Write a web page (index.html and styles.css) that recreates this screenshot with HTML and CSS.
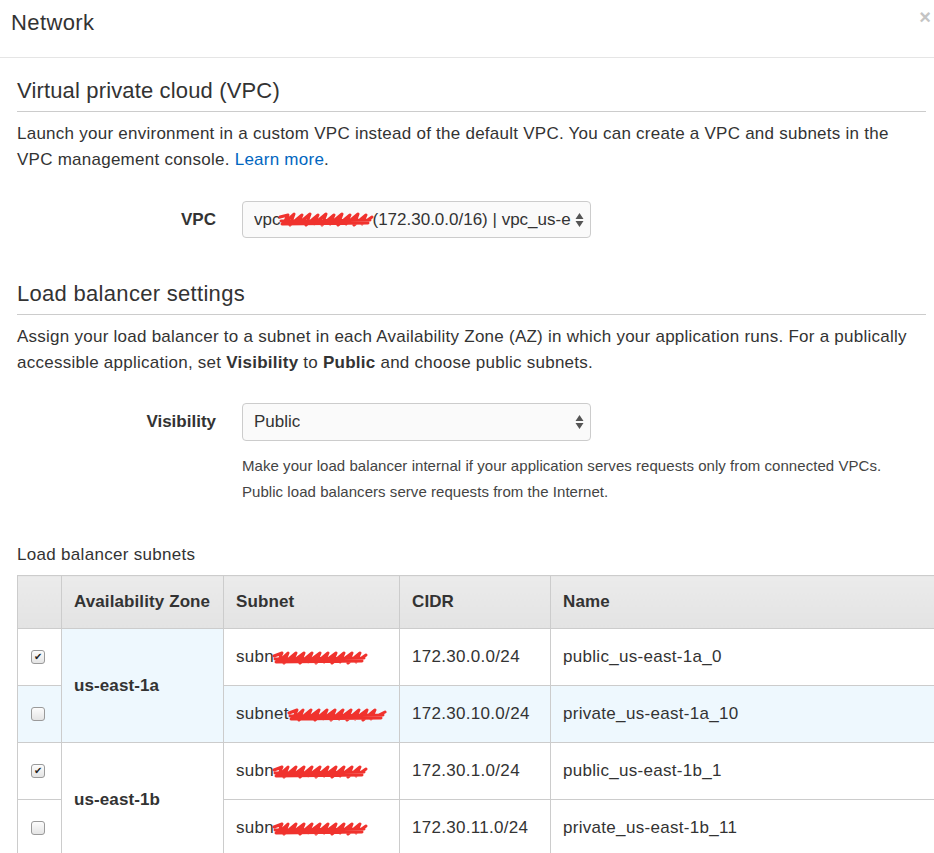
FILE: index.html
```html
<!DOCTYPE html>
<html>
<head>
<meta charset="utf-8">
<link rel="stylesheet" href="styles.css">
</head>
<body>
<div class="modal">
  <div class="modal-header">
    <h1 class="modal-title">Network</h1>
    <span class="close">×</span>
  </div>
  <div class="modal-body">
    <h2 class="section-title">Virtual private cloud (VPC)</h2>
    <p class="desc">Launch your environment in a custom VPC instead of the default VPC. You can create a VPC and subnets in the VPC management console. <a class="link">Learn more</a>.</p>
    <div class="form-row">
      <label class="form-label">VPC</label>
      <div class="select">
        <span class="select-text">vpc<svg class="scribble" width="96" height="18" viewBox="0 0 96 18"><path d="M2 6 L10 4 L6 12 L16 3 L12 14 L24 4 L20 13 L32 3 L28 14 L40 4 L36 13 L48 3 L44 14 L56 4 L52 13 L64 3 L60 14 L72 4 L68 13 L80 3 L76 14 L88 4 L84 13 L94 6 M3 10 L92 9 M4 13 L90 12" fill="none" stroke="#f0322d" stroke-width="3" stroke-linejoin="round" stroke-linecap="round"/></svg>(172.30.0.0/16) | vpc_us-e</span>
        <span class="arrows"><svg width="9" height="16" viewBox="0 0 9 16"><path d="M4.5 1 L8.5 7 L0.5 7 Z M0.5 9 L8.5 9 L4.5 15 Z" fill="#555"/></svg></span>
      </div>
    </div>

    <h2 class="section-title second">Load balancer settings</h2>
    <p class="desc">Assign your load balancer to a subnet in each Availability Zone (AZ) in which your application runs. For a publically accessible application, set <b>Visibility</b> to <b>Public</b> and choose public subnets.</p>
    <div class="form-row vis-row">
      <label class="form-label">Visibility</label>
      <div class="select">
        <span class="select-text">Public</span>
        <span class="arrows"><svg width="9" height="16" viewBox="0 0 9 16"><path d="M4.5 1 L8.5 7 L0.5 7 Z M0.5 9 L8.5 9 L4.5 15 Z" fill="#555"/></svg></span>
      </div>
    </div>
    <div class="help">
      <div>Make your load balancer internal if your application serves requests only from connected VPCs.</div>
      <div>Public load balancers serve requests from the Internet.</div>
    </div>

    <div class="subnets-label">Load balancer subnets</div>
    <table class="subnets">
      <thead>
        <tr>
          <th class="c-check"></th>
          <th class="c-az">Availability Zone</th>
          <th class="c-subnet">Subnet</th>
          <th class="c-cidr">CIDR</th>
          <th class="c-name">Name</th>
        </tr>
      </thead>
      <tbody>
        <tr>
          <td class="c-check"><span class="cb checked">✔</span></td>
          <td class="c-az az-blue" rowspan="2">us-east-1a</td>
          <td>subn<svg class="scribble" width="96" height="16" viewBox="0 0 96 16"><path d="M2 6 L10 3 L6 12 L16 3 L12 13 L24 3 L20 12 L32 3 L28 13 L40 3 L36 12 L48 3 L44 13 L56 3 L52 12 L64 3 L60 13 L72 3 L68 12 L80 3 L76 13 L88 3 L84 12 L94 5 M3 9 L92 8 M4 12 L90 11" fill="none" stroke="#f0322d" stroke-width="3" stroke-linejoin="round" stroke-linecap="round"/></svg></td>
          <td>172.30.0.0/24</td>
          <td>public_us-east-1a_0</td>
        </tr>
        <tr class="row-blue">
          <td class="c-check"><span class="cb"></span></td>
          <td>subnet<svg class="scribble" width="100" height="16" viewBox="0 0 100 16"><path d="M2 6 L10 3 L6 12 L16 3 L12 13 L24 3 L20 12 L32 3 L28 13 L40 3 L36 12 L48 3 L44 13 L56 3 L52 12 L64 3 L60 13 L72 3 L68 12 L80 3 L76 13 L88 3 L84 12 L98 5 M3 9 L96 8 M4 12 L94 11" fill="none" stroke="#f0322d" stroke-width="3" stroke-linejoin="round" stroke-linecap="round"/></svg></td>
          <td>172.30.10.0/24</td>
          <td>private_us-east-1a_10</td>
        </tr>
        <tr>
          <td class="c-check"><span class="cb checked">✔</span></td>
          <td class="c-az" rowspan="2">us-east-1b</td>
          <td>subn<svg class="scribble" width="96" height="16" viewBox="0 0 96 16"><path d="M2 6 L10 3 L6 12 L16 3 L12 13 L24 3 L20 12 L32 3 L28 13 L40 3 L36 12 L48 3 L44 13 L56 3 L52 12 L64 3 L60 13 L72 3 L68 12 L80 3 L76 13 L88 3 L84 12 L94 5 M3 9 L92 8 M4 12 L90 11" fill="none" stroke="#f0322d" stroke-width="3" stroke-linejoin="round" stroke-linecap="round"/></svg></td>
          <td>172.30.1.0/24</td>
          <td>public_us-east-1b_1</td>
        </tr>
        <tr>
          <td class="c-check"><span class="cb"></span></td>
          <td>subn<svg class="scribble" width="96" height="16" viewBox="0 0 96 16"><path d="M2 6 L10 3 L6 12 L16 3 L12 13 L24 3 L20 12 L32 3 L28 13 L40 3 L36 12 L48 3 L44 13 L56 3 L52 12 L64 3 L60 13 L72 3 L68 12 L80 3 L76 13 L88 3 L84 12 L94 5 M3 9 L92 8 M4 12 L90 11" fill="none" stroke="#f0322d" stroke-width="3" stroke-linejoin="round" stroke-linecap="round"/></svg></td>
          <td>172.30.11.0/24</td>
          <td>private_us-east-1b_11</td>
        </tr>
      </tbody>
    </table>
  </div>
</div>
</body>
</html>
```

FILE: styles.css
```css
html, body {
  margin: 0;
  padding: 0;
  background: #fff;
  overflow: hidden;
  width: 934px;
  height: 853px;
}
body {
  font-family: "Liberation Sans", Arial, sans-serif;
  color: #333;
  font-size: 17px;
}
.modal-header {
  height: 58px;
  border-bottom: 1px solid #e5e5e5;
  display: flex;
  align-items: flex-start;
  justify-content: space-between;
  padding: 0 3px 0 11px;
  box-sizing: border-box;
}
.modal-title {
  margin: 0;
  font-size: 22px;
  font-weight: normal;
  line-height: 22px;
  padding-top: 12px;
  color: #333;
  letter-spacing: 0.4px;
}
.close {
  font-size: 20px;
  line-height: 20px;
  padding-top: 7px;
  color: #c4c4c4;
  font-weight: bold;
}
.modal-body {
  padding: 0 8px 0 17px;
}
.section-title {
  margin: 0;
  font-size: 22px;
  font-weight: normal;
  line-height: 26px;
  padding-top: 20px;
  padding-bottom: 7px;
  border-bottom: 1px solid #ccc;
  letter-spacing: 0.15px;
}
.desc {
  margin: 9px 0 0 0;
  line-height: 26px;
  font-size: 17px;
  letter-spacing: 0.25px;
}
.link {
  color: #0066c0;
}
.form-row {
  display: flex;
  align-items: center;
  margin-top: 28px;
}
.form-label {
  width: 199px;
  text-align: right;
  font-weight: bold;
  font-size: 17px;
  padding-right: 26px;
}
.select {
  width: 349px;
  height: 37px;
  box-sizing: border-box;
  border: 1px solid #ccc;
  border-radius: 4px;
  background: #fafafa;
  display: flex;
  align-items: center;
  justify-content: space-between;
  padding: 0 6px 0 11px;
  font-size: 17px;
  letter-spacing: 0;
}
.select-text {
  display: flex;
  align-items: center;
  white-space: nowrap;
  overflow: hidden;
  color: #333;
  margin-right: 4px;
}
.scribble {
  display: inline-block;
  vertical-align: middle;
  margin: 0 -2px;
  flex-shrink: 0;
}
.arrows {
  display: flex;
  align-items: center;
  flex-shrink: 0;
}
.section-title.second {
  margin-top: 43px;
  padding-top: 0;
  letter-spacing: 0.3px;
}
.vis-row {
  margin-top: 27px;
}
.vis-row .select {
  height: 38px;
}
.help {
  padding-left: 225px;
  margin-top: 12px;
  font-size: 15px;
  line-height: 26px;
  color: #444;
  letter-spacing: 0.05px;
}
.subnets-label {
  margin-top: 40px;
  font-size: 17px;
  line-height: 20px;
  letter-spacing: 0.3px;
}
.subnets {
  margin-top: 10px;
  border-collapse: collapse;
  width: 940px;
  table-layout: fixed;
  font-size: 17px;
  letter-spacing: 0.3px;
}
.subnets th, .subnets td {
  border: 1px solid #ccc;
  text-align: left;
  padding: 0 12px;
  color: #333;
}
.subnets th {
  height: 52px;
  background: linear-gradient(#ebebeb, #e3e3e3);
  font-weight: bold;
  letter-spacing: 0.1px;
}
.subnets td {
  height: 56px;
}
.c-check { width: 19px; }
.c-az { width: 137px; }
.c-subnet { width: 151px; }
.c-cidr { width: 126px; }
td.c-az {
  font-weight: bold;
  letter-spacing: 0.1px;
}
.az-blue, .row-blue td {
  background: #eef8fe;
}
.cb {
  display: block;
  width: 12px;
  height: 12px;
  border: 1px solid #9a9a9a;
  border-radius: 3px;
  background: linear-gradient(#fcfcfc, #e4e4e4);
  font-size: 10px;
  line-height: 12px;
  text-align: center;
  color: #222;
  margin-left: 1px;
  letter-spacing: 0;
}
```
